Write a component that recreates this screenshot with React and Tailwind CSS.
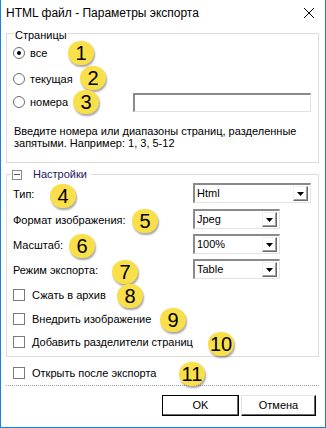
import React from 'react';

const badges = [
  { n: '1', x: 80, y: 53 },
  { n: '2', x: 92, y: 78 },
  { n: '3', x: 85, y: 102 },
  { n: '4', x: 62, y: 196 },
  { n: '5', x: 144, y: 221 },
  { n: '6', x: 81, y: 246 },
  { n: '7', x: 124, y: 272 },
  { n: '8', x: 129, y: 296 },
  { n: '9', x: 172, y: 320 },
  { n: '10', x: 220, y: 344 },
  { n: '11', x: 191, y: 374 },
];

function Badge({ n, x, y }) {
  return (
    <div
      className="absolute flex h-[24px] w-[26px] items-center justify-center rounded-full bg-[#f9df4a] text-[20px] leading-none text-black shadow-[1px_2px_2px_rgba(0,0,0,0.35)]"
      style={{ left: x - 13, top: y - 12 }}
    >
      {n}
    </div>
  );
}

function Radio({ checked, label }) {
  return (
    <div className="flex w-[120px] items-center">
      <span className="flex h-[12px] w-[12px] items-center justify-center rounded-full border border-[#6b6b6b] bg-white">
        {checked && <span className="h-[4px] w-[4px] rounded-full bg-black" />}
      </span>
      <span className="ml-[5px]">{label}</span>
    </div>
  );
}

function Check({ label, className = '' }) {
  return (
    <div className={`flex h-[20px] items-center ${className}`}>
      <span className="h-[12px] w-[12px] border border-[#7a7a7a] bg-white" />
      <span className="ml-[7px]">{label}</span>
    </div>
  );
}

function Combo({ value, width }) {
  return (
    <div
      className={`flex h-[20px] items-center border-t-2 border-l-2 border-r border-b border-t-[#8a8a8a] border-l-[#8a8a8a] border-r-[#e3e3e3] border-b-[#e3e3e3] bg-white ${width}`}
    >
      <span className="flex-1 pl-[2px]">{value}</span>
      <span className="mr-[2px] flex h-[15px] w-[15px] items-center justify-center border-t border-l border-r border-b border-t-[#f0f0f0] border-l-[#f0f0f0] border-r-[#696969] border-b-[#696969] bg-white shadow-[inset_-1px_-1px_0_#a0a0a0]">
        <svg width="7" height="4" viewBox="0 0 7 4">
          <path d="M0 0h7L3.5 4z" fill="#000" />
        </svg>
      </span>
    </div>
  );
}

function Row({ label, children, className = '' }) {
  return (
    <div className={`flex h-[20px] items-center ${className}`}>
      <span className="w-[180px] pt-[3px]">{label}</span>
      {children}
    </div>
  );
}

export default function App() {
  return (
    <div
      className="relative h-[428px] w-[326px] overflow-hidden border-x border-b border-[#1883d7] bg-white text-[11px] leading-[13px] text-black"
      style={{ fontFamily: '"Liberation Sans", Arial, sans-serif' }}
    >
      <div className="flex h-[30px] items-center justify-between pb-[4px] pl-[5px] pr-[11px] text-[12px]">
        <span>HTML файл - Параметры экспорта</span>
        <svg width="10" height="10" viewBox="0 0 10 10">
          <path d="M0 0L10 10M10 0L0 10" stroke="#000" strokeWidth="1" />
        </svg>
      </div>

      <div className="relative ml-[5px] mr-[6px] mt-[3px] border border-[#dcdcdc] pb-[13px] pl-[6px] pt-[9px]">
        <span className="absolute -top-[5px] left-[7px] bg-white px-[1px]">Страницы</span>
        <div className="flex h-[20px] items-center">
          <Radio checked label="все" />
        </div>
        <div className="mt-[6px] flex h-[20px] items-center">
          <Radio label="текущая" />
        </div>
        <div className="mt-[3px] flex h-[20px] items-center">
          <Radio label="номера" />
          <div className="h-[19px] w-[178px] border-t-2 border-l-2 border-r border-b border-t-[#8a8a8a] border-l-[#8a8a8a] border-r-[#e3e3e3] border-b-[#e3e3e3] bg-white" />
        </div>
        <p className="mt-[13px] pl-[1px] leading-[12px]">
          Введите номера или диапазоны страниц, разделенные
          <br />
          запятыми. Например: 1, 3, 5-12
        </p>
      </div>

      <div className="relative ml-[5px] mr-[6px] mt-[11px] border border-[#dcdcdc] pb-[4px] pl-[6px] pt-[8px]">
        <div className="absolute -top-[7px] left-[4px] flex items-center bg-white pr-[4px]">
          <span className="ml-[1px] flex h-[10px] w-[10px] items-center justify-center border border-[#8c8c8c] bg-white">
            <span className="h-px w-[6px] bg-[#5a5a5a]" />
          </span>
          <span className="ml-[11px] text-[#24205e]">Настройки</span>
        </div>
        <Row label="Тип:">
          <Combo value="Html" width="w-[118px]" />
        </Row>
        <Row label="Формат изображения:" className="mt-[6px]">
          <Combo value="Jpeg" width="w-[87px]" />
        </Row>
        <Row label="Масштаб:" className="mt-[5px]">
          <Combo value="100%" width="w-[87px]" />
        </Row>
        <Row label="Режим экспорта:" className="mt-[5px]">
          <Combo value="Table" width="w-[87px]" />
        </Row>
        <Check label="Сжать в архив" className="mt-[6px]" />
        <Check label="Внедрить изображение" className="mt-[4px]" />
        <Check label="Добавить разделители страниц" className="mt-[3px]" />
      </div>

      <div className="mt-[6px] pl-[12px]">
        <Check label="Открыть после экспорта" />
      </div>

      <div className="ml-[5px] mr-[6px] mt-[2px] border-t border-dotted border-[#a0a0a0]" />

      <div className="mt-[9px] flex justify-end gap-[2px] pr-[9px]">
        <button
          type="button"
          className="h-[21px] w-[77px] border border-black bg-white shadow-[inset_-1px_-1px_0_#696969,inset_1px_1px_0_#fff] text-[11px]"
        >
          OK
        </button>
        <button
          type="button"
          className="h-[21px] w-[75px] border border-t-[#e3e3e3] border-l-[#e3e3e3] border-r-black border-b-black bg-white shadow-[inset_-1px_-1px_0_#696969] text-[11px]"
        >
          Отмена
        </button>
      </div>

      {badges.map((b) => (
        <Badge key={b.n} {...b} />
      ))}
    </div>
  );
}
